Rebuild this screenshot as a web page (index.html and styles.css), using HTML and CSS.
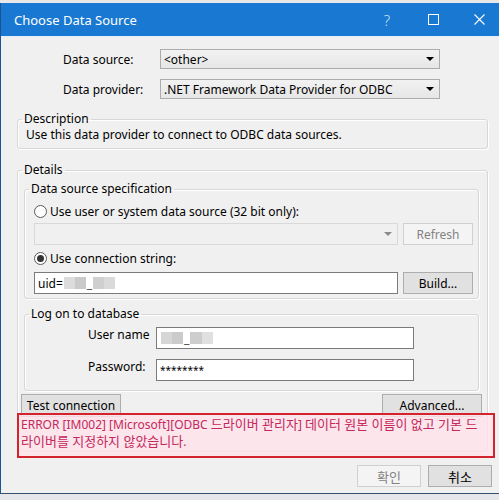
FILE: index.html
```html
<!DOCTYPE html>
<html>
<head>
<meta charset="utf-8">
<link rel="stylesheet" href="styles.css">
</head>
<body>
<div class="backdrop"></div>
<div class="window">
  <div class="titlebar">
    <span class="title">Choose Data Source</span>
    <span class="cap-btn cap-help">?</span>
    <span class="cap-btn"><svg width="11" height="11" viewBox="0 0 11 11"><rect x="0.5" y="0.5" width="10" height="10" fill="none" stroke="#fff" stroke-width="1"/></svg></span>
    <span class="cap-btn"><svg width="11" height="11" viewBox="0 0 11 11"><path d="M0.5 0.5 L10.5 10.5 M10.5 0.5 L0.5 10.5" stroke="#fff" stroke-width="1.1"/></svg></span>
  </div>
  <div class="client">
    <div class="form-row first">
      <span class="row-label">Data source:</span>
      <div class="combo"><span class="combo-text">&lt;other&gt;</span><span class="arrow"></span></div>
    </div>
    <div class="form-row second">
      <span class="row-label">Data provider:</span>
      <div class="combo"><span class="combo-text">.NET Framework Data Provider for ODBC</span><span class="arrow"></span></div>
    </div>

    <fieldset class="group desc-group">
      <legend>Description</legend>
      <div class="desc-text">Use this data provider to connect to ODBC data sources.</div>
    </fieldset>

    <fieldset class="group details-group">
      <legend>Details</legend>

      <fieldset class="group inner-group dss-group">
        <legend>Data source specification</legend>
        <div class="radio-row r1"><span class="radio"></span><span>Use user or system data source (32 bit only):</span></div>
        <div class="field-row fr1">
          <div class="combo disabled wide"><span class="combo-text"></span><span class="arrow gray"></span></div>
          <span class="btn disabled side-btn">Refresh</span>
        </div>
        <div class="radio-row r2"><span class="radio checked"></span><span>Use connection string:</span></div>
        <div class="field-row fr2">
          <div class="input wide"><span>uid=</span><span class="blur b1"></span><span class="blur b2"></span><span class="under">_</span><span class="blur b3"></span><span class="blur b4"></span></div>
          <span class="btn side-btn">Build...</span>
        </div>
      </fieldset>

      <fieldset class="group inner-group logon-group">
        <legend>Log on to database</legend>
        <div class="cred-row c1">
          <span class="cred-label">User name</span>
          <div class="input cred"><span class="blur u1"></span><span class="blur u2"></span><span class="under">_</span><span class="blur u3"></span><span class="blur u4"></span></div>
        </div>
        <div class="cred-row c2">
          <span class="cred-label">Password:</span>
          <div class="input cred"><span class="pwd">********</span></div>
        </div>
      </fieldset>

      <div class="action-row">
        <span class="btn action-btn">Test connection</span>
        <span class="btn action-btn">Advanced...</span>
      </div>
    </fieldset>

    <div class="dialog-buttons">
      <span class="btn dlg-btn disabled ko">확인</span>
      <span class="btn dlg-btn ko">취소</span>
    </div>

    <div class="error-box">ERROR [IM002] [Microsoft][ODBC <span class="ko">드라이버 관리자</span>] <span class="ko">데이터 원본 이름이 없고 기본 드</span><br><span class="ko">라이버를 지정하지 않았습니다</span>.</div>
  </div>
</div>
</body>
</html>
```

FILE: styles.css
```css
* { box-sizing: border-box; }
html, body { margin: 0; padding: 0; }
body {
  width: 499px;
  height: 500px;
  overflow: hidden;
  background: #e4e6e9;
  font-family: "Noto Sans", "Noto Sans CJK KR", sans-serif;
  font-size: 12px;
  color: #000;
}
.backdrop { height: 3px; background: #e8e8e8; }
.window {
  width: 502px;
  border-left: 1px solid #1a5696;
  border-bottom: 1px solid #33506e;
}
.titlebar {
  height: 33px;
  background: #1979d2;
  color: #fff;
  display: flex;
  align-items: center;
  padding-left: 13px;
}
.title { flex: 1; font-size: 13px; }
.cap-btn {
  width: 46px;
  height: 33px;
  display: flex;
  align-items: center;
  justify-content: center;
}
.cap-help { font-size: 15px; font-weight: 300; color: #cfe2f5; }

.client {
  position: relative;
  height: 457px;
  background: #f0f0f0;
  border-top: 1px solid #e6eef6;
}

.form-row { display: flex; align-items: center; height: 20px; padding-left: 62px; }
.form-row.first { margin-top: 12px; }
.form-row.second { margin-top: 10px; }
.row-label { width: 97px; }

.combo {
  width: 280px;
  height: 20px;
  border: 1px solid #acacac;
  background: linear-gradient(#f2f2f2, #e6e6e6);
  display: flex;
  align-items: center;
  padding-left: 3px;
}
.combo-text { flex: 1; white-space: nowrap; }
.arrow {
  width: 0; height: 0;
  border-left: 4px solid transparent;
  border-right: 4px solid transparent;
  border-top: 4px solid #000;
  margin-right: 5px;
}
.arrow.gray { border-top-color: #8a8a8a; }
.combo.disabled { background: #f0f0f0; border-color: #d9d9d9; }
.combo.wide, .input.wide { width: 364px; height: 22px; }

.group {
  margin: 0;
  padding: 0;
  border: 1px solid #d7d7d7;
  border-radius: 3px;
  box-shadow: inset 1px 1px 0 #fff, 1px 1px 0 #fff;
  min-inline-size: 0;
}
.group legend {
  margin-left: 4px;
  padding: 0 2px;
  line-height: 16px;
  font-size: 12px;
}
.desc-group { margin: 12px 0 0 16px; width: 471px; padding-bottom: 5px; }
.desc-text { padding-left: 8px; line-height: 16px; }

.details-group { margin: 13px 0 0 16px; width: 471px; padding-bottom: 34px; }
.inner-group { margin-left: 6px; width: 455px; }
.dss-group { margin-top: 3px; padding-bottom: 4px; }

.radio-row { display: flex; align-items: center; height: 16px; padding-left: 9px; gap: 3px; }
.radio-row.r1 { margin-top: 6px; }
.radio-row.r2 { margin-top: 5px; }
.radio {
  width: 13px; height: 13px;
  border: 1px solid #5a5a5a;
  border-radius: 50%;
  background: #fff;
  display: flex; align-items: center; justify-content: center;
}
.radio.checked::after {
  content: "";
  width: 7px; height: 7px;
  border-radius: 50%;
  background: #333;
}

.field-row { display: flex; gap: 5px; padding-left: 9px; }
.field-row.fr1 { margin-top: 4px; }
.field-row.fr2 { margin-top: 6px; }

.btn {
  display: flex;
  align-items: center;
  justify-content: center;
  border: 1px solid #adadad;
  background: #e1e1e1;
  white-space: nowrap;
}
.btn.disabled { border-color: #d0d0d0; background: #f4f4f4; color: #838383; }
.side-btn { width: 70px; height: 22px; }

.input {
  background: #fff;
  border: 1px solid #7a7a7a;
  display: flex;
  align-items: center;
  padding-left: 3px;
  white-space: nowrap;
}
.blur { display: inline-block; height: 12px; }
.b1 { width: 11px; background: #dcdcdc; margin-left: 1px; }
.b2 { width: 11px; background: #cacaca; }
.under { margin: 0 1px; color: #444; }
.b3 { width: 11px; background: #cfcfcf; }
.b4 { width: 11px; background: #dadada; }
.u1 { width: 11px; background: #d6d6d6; margin-left: 1px; }
.u2 { width: 11px; background: #cbcbcb; }
.u3 { width: 12px; background: #cdcdcd; }
.u4 { width: 11px; background: #e0e0e0; }

.logon-group { margin-top: 7px; padding-bottom: 9px; }
.cred-row { display: flex; align-items: flex-start; padding-left: 63px; }
.cred-row.c1 { margin-top: 5px; }
.cred-row.c2 { margin-top: 10px; }
.cred-label { width: 68px; line-height: 16px; }
.input.cred { width: 258px; height: 22px; }
.pwd { font-size: 10px; letter-spacing: 0; }

.action-row { display: flex; justify-content: space-between; margin: 3px 5px 0 3px; }
.action-btn { width: 100px; height: 23px; }

.dialog-buttons { display: flex; gap: 7px; margin-top: 13px; padding-left: 356px; }
.dlg-btn { width: 64px; height: 22px; }

.ko { font-size: 13px; }

.error-box {
  position: absolute;
  left: 16px;
  top: 376px;
  width: 478px;
  height: 45px;
  border: 2px solid #d3232d;
  background: rgba(255, 226, 234, 0.82);
  color: #c4285c;
  padding: 1px 0 0 2px;
  line-height: 16px;
  white-space: nowrap;
  overflow: hidden;
}
```
